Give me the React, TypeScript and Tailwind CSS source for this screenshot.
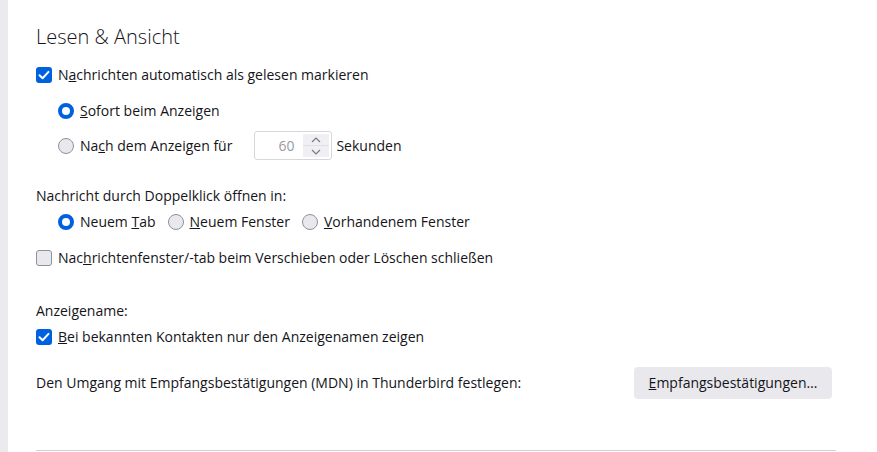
import { ReactNode } from "react";

// Checkbox drawn like the Firefox/Thunderbird native control
function Check({ checked }: { checked?: boolean }) {
  return checked ? (
    <span className="flex h-4 w-4 shrink-0 items-center justify-center rounded-[3px] bg-[#0061e0]">
      <svg viewBox="0 0 16 16" className="h-4 w-4">
        <path d="M3.5 8.2 6.6 11.2 12.5 4.9" fill="none" stroke="#fff" strokeWidth="2" strokeLinecap="round" strokeLinejoin="round" />
      </svg>
    </span>
  ) : (
    <span className="h-4 w-4 shrink-0 rounded-[3px] border border-[#8f8f9d] bg-[#e9e9ed]" />
  );
}

function Radio({ checked }: { checked?: boolean }) {
  return checked ? (
    <span className="h-4 w-4 shrink-0 rounded-full border-[4px] border-[#0061e0] bg-white" />
  ) : (
    <span className="h-4 w-4 shrink-0 rounded-full border border-[#8f8f9d] bg-[#e9e9ed]" />
  );
}

function Option({ control, children }: { control: ReactNode; children: ReactNode }) {
  return (
    <label className="flex items-center gap-[6px]">
      {control}
      <span>{children}</span>
    </label>
  );
}

export default function App() {
  return (
    <div className="flex h-[452px] w-[877px] overflow-hidden bg-white text-[14px] leading-[20px] text-[#15141a] [font-family:'Open_Sans',sans-serif]">
      <div className="w-2 shrink-0 bg-[#ebebef]" />
      <div className="flex w-[828px] flex-col pl-7 pt-[22px]">
        <h1 className="text-[20px] font-light leading-[30px]">Lesen &amp; Ansicht</h1>

        <div className="mt-[13px]">
          <Option control={<Check checked />}>
            N<u>a</u>chrichten automatisch als gelesen markieren
          </Option>
        </div>
        <div className="ml-[22px] mt-[16px] flex flex-col">
          <Option control={<Radio checked />}>
            <u>S</u>ofort beim Anzeigen
          </Option>
          <div className="mt-[10px] flex items-center">
            <Option control={<Radio />}>
              Na<u>c</u>h dem Anzeigen für
            </Option>
            <div className="ml-[22px] flex h-[29px] w-[78px] items-stretch rounded-[3px] border border-[#d7d7db] bg-white">
              <span className="flex flex-1 items-center justify-end pr-[9px] text-[#9a9aa0]">60</span>
              <span className="my-[2px] mr-[2px] flex w-[26px] flex-col bg-[#f0f0f4]">
                <span className="flex flex-1 items-center justify-center border-b border-[#e0e0e6]">
                  <svg viewBox="0 0 12 8" className="h-[8px] w-3">
                    <path d="M2 6 6 2 10 6" fill="none" stroke="#7a7a80" strokeWidth="1.2" />
                  </svg>
                </span>
                <span className="flex flex-1 items-center justify-center">
                  <svg viewBox="0 0 12 8" className="h-[8px] w-3">
                    <path d="M2 2 6 6 10 2" fill="none" stroke="#7a7a80" strokeWidth="1.2" />
                  </svg>
                </span>
              </span>
            </div>
            <span className="ml-1">Sekunden</span>
          </div>
        </div>

        <p className="mt-[26px]">Nachricht durch Doppelklick öffnen in:</p>
        <div className="ml-[22px] mt-[6px] flex items-center gap-[12px]">
          <Option control={<Radio checked />}>
            Neuem <u>T</u>ab
          </Option>
          <Option control={<Radio />}>
            <u>N</u>euem Fenster
          </Option>
          <Option control={<Radio />}>
            <u>V</u>orhandenem Fenster
          </Option>
        </div>

        <div className="mt-[16px]">
          <Option control={<Check />}>
            Nac<u>h</u>richtenfenster/-tab beim Verschieben oder Löschen schließen
          </Option>
        </div>

        <p className="mt-[33px]">Anzeigename:</p>
        <div className="mt-[6px]">
          <Option control={<Check checked />}>
            <u>B</u>ei bekannten Kontakten nur den Anzeigenamen zeigen
          </Option>
        </div>

        <div className="mt-[20px] flex items-center justify-between pr-1">
          <span>Den Umgang mit Empfangsbestätigungen (MDN) in Thunderbird festlegen:</span>
          <button className="h-8 w-[198px] rounded-[4px] bg-[#e9e9ed] text-[14px]">
            <u>E</u>mpfangsbestätigungen…
          </button>
        </div>

        <div className="mt-auto mb-[1px] h-px bg-[#d0d0d5]" />
      </div>
    </div>
  );
}
